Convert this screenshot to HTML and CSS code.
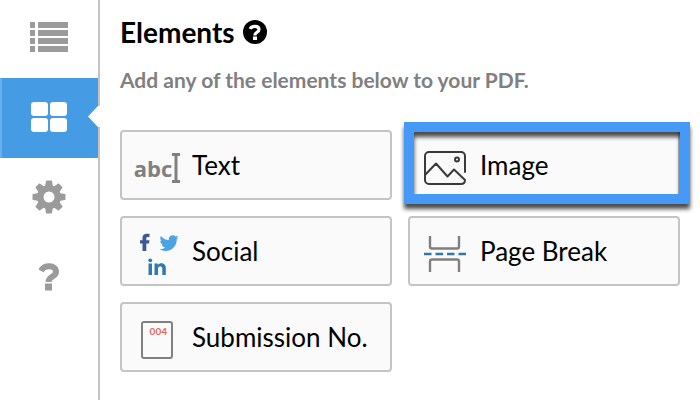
FILE: index.html
```html
<!DOCTYPE html>
<html lang="en">

<head>
    <meta charset="UTF-8">
    <meta name="viewport" content="width=device-width, initial-scale=1.0">
    <title>PDF Editor - Elements</title>
    <link rel="stylesheet" href="styles.css">
</head>

<body>
    <nav class="sidebar">
        <a href="#fields" class="tab" aria-label="Fields">
            <svg width="38" height="30" viewBox="0 0 38 30" fill="currentColor">
                <path d="M0 0h5v6H0zM8 0h30v6H8zM0 8h5v6H0zM8 8h30v6H8zM0 16h5v6H0zM8 16h30v6H8zM0 24h5v6H0zM8 24h30v6H8z"/>
            </svg>
        </a>
        <a href="#elements" class="tab active" aria-label="Elements">
            <svg width="36" height="30" viewBox="0 0 36 30" fill="currentColor">
                <rect width="17" height="14" rx="3"/>
                <rect x="19" width="17" height="14" rx="3"/>
                <rect y="16" width="17" height="14" rx="3"/>
                <rect x="19" y="16" width="17" height="14" rx="3"/>
            </svg>
        </a>
        <a href="#settings" class="tab" aria-label="Settings">
            <svg width="34" height="34" viewBox="-17 -17 34 34">
                <g fill="currentColor">
                    <path id="tooth" d="M-4-10L-3-16Q-2.8-16.500-2.300-16.500H2.300Q2.800-16.500 3-16L4-10V10L3 16Q2.800 16.500 2.300 16.500H-2.300Q-2.800 16.500-3 16L-4 10Z"/>
                    <use href="#tooth" transform="rotate(45)"/>
                    <use href="#tooth" transform="rotate(90)"/>
                    <use href="#tooth" transform="rotate(135)"/>
                    <circle r="12"/>
                </g>
                <circle r="5.500" fill="#fff"/>
            </svg>
        </a>
        <a href="#help" class="tab" aria-label="Help">
            <svg width="20" height="28" viewBox="0 0 20 28">
                <path d="M2 8C5 1.500 17 1.500 17 9C17 14 9.500 13 9.500 19" fill="none" stroke="currentColor" stroke-width="6"/>
                <path d="M6 20.500h7v7H6z" fill="currentColor"/>
            </svg>
        </a>
    </nav>

    <main class="panel">
        <h1>
            Elements
            <svg width="24" height="24" viewBox="0 0 24 24">
                <circle cx="12" cy="12" r="12"/>
                <path d="M7.200 9C8.500 5.500 16 5.500 16 9.500C16 12.500 11.800 12 11.800 15.500" fill="none" stroke="#fff" stroke-width="3.200"/>
                <path d="M10 16.500h4v3.500h-4z" fill="#fff"/>
            </svg>
        </h1>
        <p class="hint">Add any of the elements below to your PDF.</p>

        <div class="elements">
            <button type="button" class="element">
                <span class="icon">
                    <span class="abc">abc</span>
                    <svg width="8" height="30" viewBox="0 0 8 30" fill="none" stroke="#808080" stroke-width="3">
                        <path d="M0 1.500h8M4 1.500v27M0 28.500h8"/>
                    </svg>
                </span>
                Text
            </button>
            <button type="button" class="element highlighted">
                <span class="icon">
                    <svg width="42" height="34" viewBox="0 0 42 34" fill="none" stroke="#3a3a3a" stroke-width="2" stroke-linecap="round" stroke-linejoin="round">
                        <path d="M41 21V5a4 4 0 0 0-4-4H5a4 4 0 0 0-4 4v24a4 4 0 0 0 4 4h32c3 0 4-2 4-4L30 18.500l-6.500 7L12 12.500L1 24"/>
                        <circle cx="33" cy="8.500" r="2"/>
                    </svg>
                </span>
                Image
            </button>
            <button type="button" class="element">
                <span class="icon">
                    <svg width="44" height="42" viewBox="-4 0 44 42">
                        <path d="M3.500 18V10.500H1V7.300h2.500V5C3.500 2 5.300.8 7.800.8H10.500v3.200H8.800C7.600 4 7.300 4.600 7.300 5.500v1.800H10.500L10 10.500H7.300V18z" fill="#3f5796"/>
                        <path transform="translate(20.500 .5) scale(.8)" d="M23.950 4.570a10 10 0 0 1-2.820.77 4.960 4.960 0 0 0 2.160-2.720c-.95.550-2 .960-3.130 1.180a4.920 4.920 0 0 0-8.380 4.480C7.690 8.090 4.070 6.130 1.640 3.160a4.820 4.820 0 0 0-.67 2.480c0 1.710.87 3.210 2.190 4.100a4.900 4.900 0 0 1-2.230-.620v.06a4.920 4.920 0 0 0 3.950 4.830 5 5 0 0 1-2.210.08 4.940 4.940 0 0 0 4.600 3.420A9.870 9.870 0 0 1 0 19.540a14 14 0 0 0 7.550 2.210c9.050 0 14-7.500 14-13.990 0-.210 0-.420-.020-.630a9.940 9.940 0 0 0 2.420-2.560z" fill="#4aa3e4"/>
                        <path d="M9.500 30.500h3.500V42H9.500zM15.500 30.500h3.300v1.600c2-3 8-2.500 8 2.900v7h-3.500v-6.200c0-3.500-4.300-3.300-4.300 0V42h-3.500z" fill="#2f78b3"/>
                        <circle cx="11.250" cy="27.300" r="1.900" fill="#2f78b3"/>
                    </svg>
                </span>
                Social
            </button>
            <button type="button" class="element">
                <span class="icon">
                    <svg width="42" height="36" viewBox="0 0 42 36" fill="none" stroke="#808080" stroke-width="2.400">
                        <path d="M6 0v10.500q0 2 2 2h25q2 0 2-2V0M6 36V25.500q0-2 2-2h25q2 0 2 2v10.500"/>
                        <path d="M0 18h42" stroke="#2f78a8" stroke-dasharray="7.500 4"/>
                    </svg>
                </span>
                Page Break
            </button>
            <button type="button" class="element">
                <span class="icon">
                    <span class="page">004</span>
                </span>
                Submission No.
            </button>
        </div>
    </main>
</body>

</html>
```
FILE: styles.css
```css
* {
    box-sizing: border-box;
}

body {
    display: flex;
    min-height: 100vh;
    margin: 0;
    background: #fff;
    color: #000;
    font-family: Lato, "Open Sans", sans-serif;
}

svg {
    flex: none;
}

.sidebar {
    flex: none;
    width: 100px;
    margin-top: -2px;
    border-right: 2px solid #c4c4c4;
}

.tab {
    display: flex;
    align-items: center;
    justify-content: center;
    height: 80px;
    padding-bottom: 3px;
    color: #9b9b9b;
}

.tab.active {
    position: relative;
    background: #459be4;
    box-shadow: inset 2px 0 #6aaeea;
    color: #fff;
}

/* arrow pointing from the panel into the active tab */
.tab.active::after {
    content: "";
    position: absolute;
    top: 28px;
    right: -2px;
    width: 12px;
    height: 21px;
    background: #fff;
    clip-path: polygon(0 50%, 83% 0, 100% 0, 100% 100%, 83% 100%);
}

.panel {
    flex: 1;
    padding: 16px 20px;
}

h1 {
    display: flex;
    align-items: center;
    gap: 8px;
    margin: 0;
    font-size: 28px;
    line-height: 32px;
}

.hint {
    margin: 20px 0 38px;
    color: #808080;
    font-size: 21px;
    font-weight: 700;
    line-height: 24px;
}

.elements {
    display: grid;
    grid-template-columns: 1fr 1fr;
    gap: 16px;
}

.element {
    position: relative;
    display: flex;
    align-items: center;
    gap: 12px;
    height: 70px;
    padding: 0 12px;
    background: #fafafa;
    border: 2px solid #c4c4c4;
    border-radius: 4px;
    color: #000;
    font-family: inherit;
    font-size: 26px;
    text-align: left;
}

.icon {
    display: flex;
    align-items: center;
    justify-content: center;
    width: 46px;
    padding-top: 5px;
}

.abc {
    color: #808080;
    font-family: "Open Sans", sans-serif;
    font-size: 22px;
    font-weight: 700;
    line-height: 24px;
}

.page {
    width: 32px;
    height: 38px;
    padding: 2px 4px;
    border: 2px solid #808080;
    border-radius: 3px;
    color: #dd6a60;
    font-size: 10px;
    font-weight: 700;
    line-height: 12px;
    text-align: right;
}

.highlighted::after {
    content: "";
    position: absolute;
    top: -10px;
    right: -12px;
    bottom: -6px;
    left: -6px;
    border: 10px solid #4799f8;
    filter: drop-shadow(0 5px 2px rgba(0, 0, 0, 0.7));
}
```
